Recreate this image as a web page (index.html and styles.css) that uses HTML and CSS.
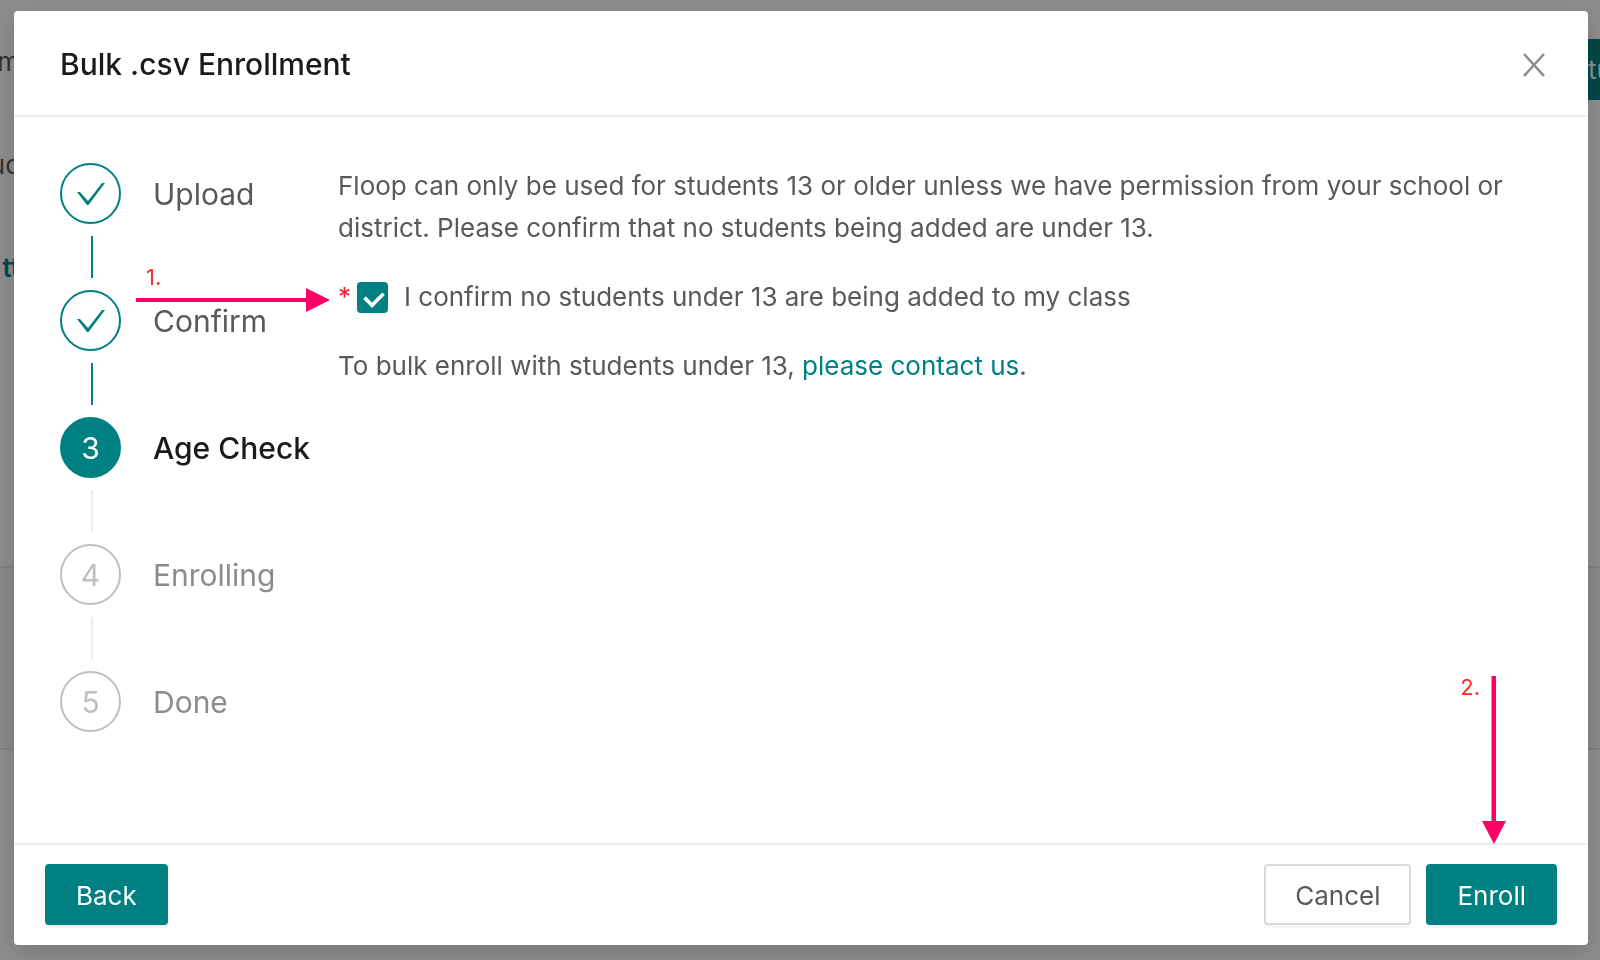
FILE: index.html
```html
<!DOCTYPE html>
<html lang="en">
<head>
  <title>Bulk .csv Enrollment</title>
  <meta charset="UTF-8">
  <link rel="stylesheet" href="styles.css">
</head>
<body>
  <div class="page">
    <div class="page-nav">
      <span class="page-text">m</span>
      <span class="page-text">uc</span>
      <a class="page-link" href="#">tt</a>
    </div>
    <button class="page-button" type="button">tu</button>
    <div class="page-band"></div>
  </div>

  <div class="mask">
    <div class="modal" role="dialog" aria-labelledby="modal-title">
      <div class="modal-header">
        <h1 class="modal-title" id="modal-title">Bulk .csv Enrollment</h1>
        <button class="close" type="button" aria-label="Close">
          <svg width="24" height="26" viewBox="0 0 24 26"><path d="M2 2L22 24M22 2L2 24" fill="none" stroke="currentColor" stroke-width="2.6"/></svg>
        </button>
      </div>

      <div class="modal-body">
        <ol class="steps">
          <li class="step finished">
            <span class="step-icon"><svg width="30" height="26" viewBox="0 0 30 26"><path d="M1 11H4L12 20L26 2H29L12.500 24H11Z" fill="currentColor"/></svg></span>
            <span class="step-title">Upload</span>
          </li>
          <li class="step finished">
            <span class="step-icon"><svg width="30" height="26" viewBox="0 0 30 26"><path d="M1 11H4L12 20L26 2H29L12.500 24H11Z" fill="currentColor"/></svg></span>
            <span class="step-title">Confirm</span>
          </li>
          <li class="step active">
            <span class="step-icon">3</span>
            <span class="step-title">Age Check</span>
          </li>
          <li class="step">
            <span class="step-icon">4</span>
            <span class="step-title">Enrolling</span>
          </li>
          <li class="step">
            <span class="step-icon">5</span>
            <span class="step-title">Done</span>
          </li>
        </ol>

        <div class="content">
          <p>Floop can only be used for students 13 or older unless we have permission from your school or district. Please confirm that no students being added are under 13.</p>
          <div class="confirm-row">
            <span class="required">*</span>
            <input class="checkbox" type="checkbox" id="confirm-age" checked>
            <label for="confirm-age">I confirm no students under 13 are being added to my class</label>
            <div class="callout callout-right">
              <span class="callout-number">1.</span>
              <svg width="194" height="24" viewBox="0 0 194 24"><path d="M0 10H170V0L194 12L170 24V14H0Z" fill="currentColor"/></svg>
            </div>
          </div>
          <p>To bulk enroll with students under 13, <a class="link" href="#">please contact us</a>.</p>
        </div>
      </div>

      <div class="modal-footer">
        <button class="btn btn-primary" type="button">Back</button>
        <div class="footer-right">
          <button class="btn" type="button">Cancel</button>
          <button class="btn btn-primary" type="button">Enroll</button>
          <div class="callout callout-down">
            <span class="callout-number">2.</span>
            <svg width="24" height="168" viewBox="0 0 24 168"><path d="M9.500 0H14V145H24L12 168L0 145H9.500Z" fill="currentColor"/></svg>
          </div>
        </div>
      </div>
    </div>
  </div>
</body>
</html>
```
FILE: styles.css
```css
* {
  box-sizing: border-box;
}

body {
  margin: 0;
  font-family: Inter, "Liberation Sans", sans-serif;
  font-size: 26px;
  line-height: 42px;
  color: #595959;
  overflow: hidden;
}

button {
  font-family: inherit;
  font-size: 26px;
  cursor: pointer;
}

a {
  color: #008080;
  text-decoration: none;
}

p {
  margin: 0;
}

/* page behind the dialog */
.page {
  display: grid;
  grid-template-columns: 1fr auto;
  grid-template-rows: 566px 184px;
  min-height: 100vh;
  background-color: #fff;
}

.page-nav {
  display: flex;
  flex-direction: column;
  align-items: flex-end;
  gap: 61px;
  width: 20px;
  padding-top: 41px;
}

.page-link {
  font-weight: 600;
}

.page-button {
  height: 61px;
  padding: 0 0 0 32px;
  margin-top: 39px;
  width: 44px;
  text-align: left;
  border: none;
  background-color: #008080;
  color: #fff;
  overflow: hidden;
}

.page-band {
  grid-column: 1 / 3;
  background-color: #fafafa;
  border-top: 2px solid #e8e8e8;
  border-bottom: 2px solid #e8e8e8;
}

/* dialog */
.mask {
  position: fixed;
  inset: 0;
  display: flex;
  padding: 11px 12px 15px 14px;
  background-color: rgba(0, 0, 0, 0.45);
}

.modal {
  flex: 1;
  display: flex;
  flex-direction: column;
  background-color: #fff;
  border-radius: 4px;
  box-shadow: 0 8px 23px rgba(0, 0, 0, 0.15);
}

.modal-header {
  display: flex;
  justify-content: space-between;
  align-items: center;
  padding: 32px 42px 30px 46px;
  border-bottom: 2px solid #ededed;
}

.modal-title {
  margin: 0;
  font-size: 30px;
  font-weight: 500;
  color: #1a1a1a;
}

.close {
  display: flex;
  padding: 2px 0 0;
  border: none;
  background: none;
  color: #8c8c8c;
}

.modal-body {
  flex: 1;
  display: flex;
  gap: 28px;
  padding: 46px;
}

.modal-footer {
  display: flex;
  justify-content: space-between;
  padding: 19px 31px 20px;
  border-top: 2px solid #ededed;
}

.footer-right {
  position: relative;
  display: flex;
  gap: 15px;
}

.btn {
  height: 61px;
  padding: 2px 29px 0;
  border: 2px solid #d9d9d9;
  border-radius: 4px;
  background-color: #fff;
  color: #595959;
  box-shadow: 0 3px 0 rgba(0, 0, 0, 0.03);
}

.btn-primary {
  border-color: #008080;
  background-color: #008080;
  color: #fff;
  box-shadow: 0 3px 0 rgba(0, 0, 0, 0.045);
}

/* steps */
.steps {
  display: flex;
  flex-direction: column;
  gap: 12px;
  margin: 0;
  padding: 0;
  list-style: none;
}

.step {
  display: grid;
  grid-template-columns: 61px auto;
  column-gap: 32px;
  row-gap: 12px;
  align-items: center;
  font-size: 30px;
  color: #8c8c8c;
}

.step::after {
  content: "";
  width: 2px;
  height: 42px;
  margin-left: 31px;
  background-color: #ececec;
}

.step:last-child::after {
  display: none;
}

.step-icon {
  display: flex;
  justify-content: center;
  align-items: center;
  height: 61px;
  border: 2px solid #bfbfbf;
  border-radius: 50%;
  color: #bfbfbf;
}

.finished {
  color: #595959;
}

.finished .step-icon {
  border-color: #008080;
  color: #008080;
}

.finished::after {
  background-color: #008080;
}

.active .step-icon {
  border-color: #008080;
  background-color: #008080;
  color: #fff;
}

.active .step-title {
  font-weight: 500;
  color: #1a1a1a;
}

/* step content */
.content {
  flex: 1;
  display: flex;
  flex-direction: column;
  gap: 27px;
  padding-top: 2px;
}

.confirm-row {
  position: relative;
  display: flex;
  align-items: center;
}

.required {
  width: 19px;
  color: #f5222d;
}

.checkbox {
  appearance: none;
  width: 31px;
  height: 31px;
  margin: 0 16px 0 0;
  border-radius: 4px;
  background-color: #008080;
}

.checkbox:checked::before {
  content: "";
  display: block;
  width: 10px;
  height: 16px;
  margin: 5px 0 0 10px;
  border: solid #fff;
  border-width: 0 4px 4px 0;
  transform: rotate(45deg) scale(0.9);
}

/* numbered arrows */
.callout {
  position: absolute;
  display: flex;
  color: #ff0066;
}

.callout-number {
  font-size: 22px;
  line-height: 22px;
  color: #ff2a2a;
}

.callout-right {
  right: 100%;
  bottom: 6px;
  flex-direction: column;
  margin-right: 8px;
}

.callout-right .callout-number {
  padding-left: 10px;
}

.callout-down {
  right: 51px;
  bottom: 100%;
  gap: 2px;
  margin-bottom: 20px;
}
```
